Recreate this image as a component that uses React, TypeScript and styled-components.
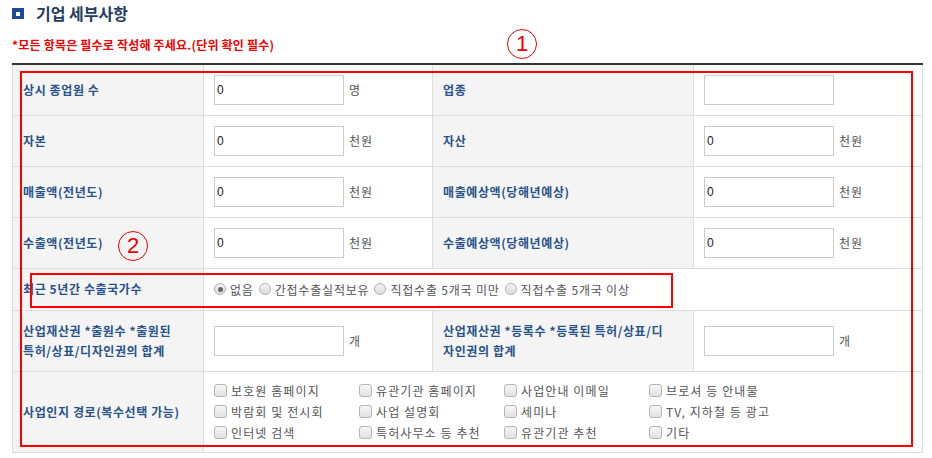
import styled, { createGlobalStyle } from 'styled-components';

const GlobalStyle = createGlobalStyle`
  html, body {
    margin: 0;
    padding: 0;
    background: #fff;
  }
  body {
    font-family: "Noto Sans CJK KR", "Noto Sans", sans-serif;
    font-size: 12px;
    color: #555;
  }
`;

const Page = styled.div`
  position: relative;
  width: 932px;
  height: 458px;
  padding: 0 10px 0 12px;
  box-sizing: border-box;
  overflow: hidden;
`;

const TitleRow = styled.h2`
  display: flex;
  align-items: center;
  gap: 12px;
  margin: 0;
  padding-top: 3px;
  height: 21px;
  font-size: 16px;
  font-weight: 700;
  color: #253c60;
  line-height: 21px;
`;

const TitleIcon = styled.span`
  width: 12px;
  height: 11px;
  background: #1b4c96;
  display: flex;
  align-items: center;
  justify-content: center;
  &::after {
    content: '';
    width: 4px;
    height: 4px;
    background: #fff;
  }
`;

const Notice = styled.p`
  margin: 12px 0 0;
  height: 18px;
  line-height: 18px;
  font-size: 12px;
  font-weight: 700;
  color: #f00000;
  letter-spacing: 0.2px;
`;

const Table = styled.table`
  margin-top: 9px;
  width: 910px;
  border-collapse: collapse;
  table-layout: fixed;
  border-top: 2px solid #333;
`;

const Row = styled.tr<{ $h: number }>`
  height: ${(p) => p.$h}px;
`;

const Label = styled.th`
  background: #f4f4f4;
  border: 1px solid #dddddd;
  border-top: none;
  padding: 0 8px 0 10px;
  text-align: left;
  font-weight: 700;
  font-size: 12px;
  line-height: 20px;
  letter-spacing: 0.6px;
  color: #27528a;
`;

const Cell = styled.td`
  border: 1px solid #dddddd;
  border-top: none;
  padding: 0 0 0 10px;
  vertical-align: middle;
`;

const Field = styled.div`
  display: flex;
  align-items: center;
  gap: 5px;
`;

const Input = styled.input`
  width: 130px;
  height: 30px;
  box-sizing: border-box;
  border: 1px solid #cccccc;
  padding: 0 2px;
  font-family: "Liberation Sans", sans-serif;
  font-size: 12px;
  color: #222;
  outline: none;
`;

const Unit = styled.span`
  font-size: 12px;
  color: #555;
  letter-spacing: 1px;
`;

const Options = styled.div`
  display: flex;
  align-items: center;
  gap: 5px;
`;

const Option = styled.label<{ $wide?: boolean }>`
  display: flex;
  align-items: center;
  gap: 4px;
  font-size: 12px;
  color: #555;
  letter-spacing: ${(p) => (p.$wide ? 1.1 : 0.8)}px;
  white-space: nowrap;
`;

const Radio = styled.span<{ $on?: boolean }>`
  width: 12px;
  height: 12px;
  border-radius: 50%;
  border: 1px solid #b3b3b3;
  box-sizing: border-box;
  background: linear-gradient(#f3f3f3, #dcdcdc);
  display: flex;
  align-items: center;
  justify-content: center;
  &::after {
    content: '';
    width: 5px;
    height: 5px;
    border-radius: 50%;
    background: ${(p) => (p.$on ? '#666' : 'transparent')};
  }
`;

const CheckGrid = styled.div`
  display: grid;
  grid-template-columns: repeat(4, 145px);
  row-gap: 4px;
`;

const Box = styled.span`
  width: 13px;
  height: 13px;
  border-radius: 3px;
  border: 1px solid #b5b5b5;
  box-sizing: border-box;
  background: linear-gradient(#f6f6f6, #e2e2e2);
`;

const Frame = styled.div<{ $x: number; $y: number; $w: number; $h: number }>`
  position: absolute;
  left: ${(p) => p.$x}px;
  top: ${(p) => p.$y}px;
  width: ${(p) => p.$w}px;
  height: ${(p) => p.$h}px;
  border: 2px solid #ff0000;
  box-sizing: border-box;
  pointer-events: none;
`;

const Marker = styled.span<{ $x: number; $y: number }>`
  position: absolute;
  left: ${(p) => p.$x - 15}px;
  top: ${(p) => p.$y - 15}px;
  width: 30px;
  height: 30px;
  border: 1.5px solid #ee0000;
  border-radius: 50%;
  box-sizing: border-box;
  display: flex;
  align-items: center;
  justify-content: center;
  font-family: "Liberation Sans", sans-serif;
  font-size: 22px;
  color: #ee0000;
  line-height: 1;
`;

function NumField({ value = '0', unit }: { value?: string; unit?: string }) {
  return (
    <Field>
      <Input defaultValue={value} />
      {unit && <Unit>{unit}</Unit>}
    </Field>
  );
}

const checks = [
  '보호원 홈페이지', '유관기관 홈페이지', '사업안내 이메일', '브로셔 등 안내물',
  '박람회 및 전시회', '사업 설명회', '세미나', 'TV, 지하철 등 광고',
  '인터넷 검색', '특허사무소 등 추천', '유관기관 추천', '기타',
];

export default function App() {
  return (
    <Page>
      <GlobalStyle />
      <TitleRow>
        <TitleIcon />
        기업 세부사항
      </TitleRow>
      <Notice>*모든 항목은 필수로 작성해 주세요.(단위 확인 필수)</Notice>

      <Table>
        <colgroup>
          <col style={{ width: 191 }} />
          <col style={{ width: 229 }} />
          <col style={{ width: 261 }} />
          <col style={{ width: 229 }} />
        </colgroup>
        <tbody>
          <Row $h={51}>
            <Label>상시 종업원 수</Label>
            <Cell><NumField unit="명" /></Cell>
            <Label>업종</Label>
            <Cell><NumField value="" /></Cell>
          </Row>
          <Row $h={51}>
            <Label>자본</Label>
            <Cell><NumField unit="천원" /></Cell>
            <Label>자산</Label>
            <Cell><NumField unit="천원" /></Cell>
          </Row>
          <Row $h={51}>
            <Label>매출액(전년도)</Label>
            <Cell><NumField unit="천원" /></Cell>
            <Label>매출예상액(당해년예상)</Label>
            <Cell><NumField unit="천원" /></Cell>
          </Row>
          <Row $h={51}>
            <Label>수출액(전년도)</Label>
            <Cell><NumField unit="천원" /></Cell>
            <Label>수출예상액(당해년예상)</Label>
            <Cell><NumField unit="천원" /></Cell>
          </Row>
          <Row $h={42}>
            <Label>최근 5년간 수출국가수</Label>
            <Cell colSpan={3}>
              <Options>
                <Option><Radio $on />없음</Option>
                <Option><Radio />간접수출실적보유</Option>
                <Option><Radio />직접수출 5개국 미만</Option>
                <Option><Radio />직접수출 5개국 이상</Option>
              </Options>
            </Cell>
          </Row>
          <Row $h={61}>
            <Label>산업재산권 *출원수 *출원된<br />특허/상표/디자인권의 합계</Label>
            <Cell><NumField value="" unit="개" /></Cell>
            <Label>산업재산권 *등록수 *등록된 특허/상표/디<br />자인권의 합계</Label>
            <Cell><NumField value="" unit="개" /></Cell>
          </Row>
          <Row $h={81}>
            <Label>사업인지 경로(복수선택 가능)</Label>
            <Cell colSpan={3}>
              <CheckGrid>
                {checks.map((c) => (
                  <Option key={c} $wide><Box />{c}</Option>
                ))}
              </CheckGrid>
            </Cell>
          </Row>
        </tbody>
      </Table>

      <Frame $x={20} $y={71} $w={893} $h={376} />
      <Frame $x={30} $y={273} $w={643} $h={35} />
      <Marker $x={522} $y={44}>1</Marker>
      <Marker $x={133} $y={246}>2</Marker>
    </Page>
  );
}
